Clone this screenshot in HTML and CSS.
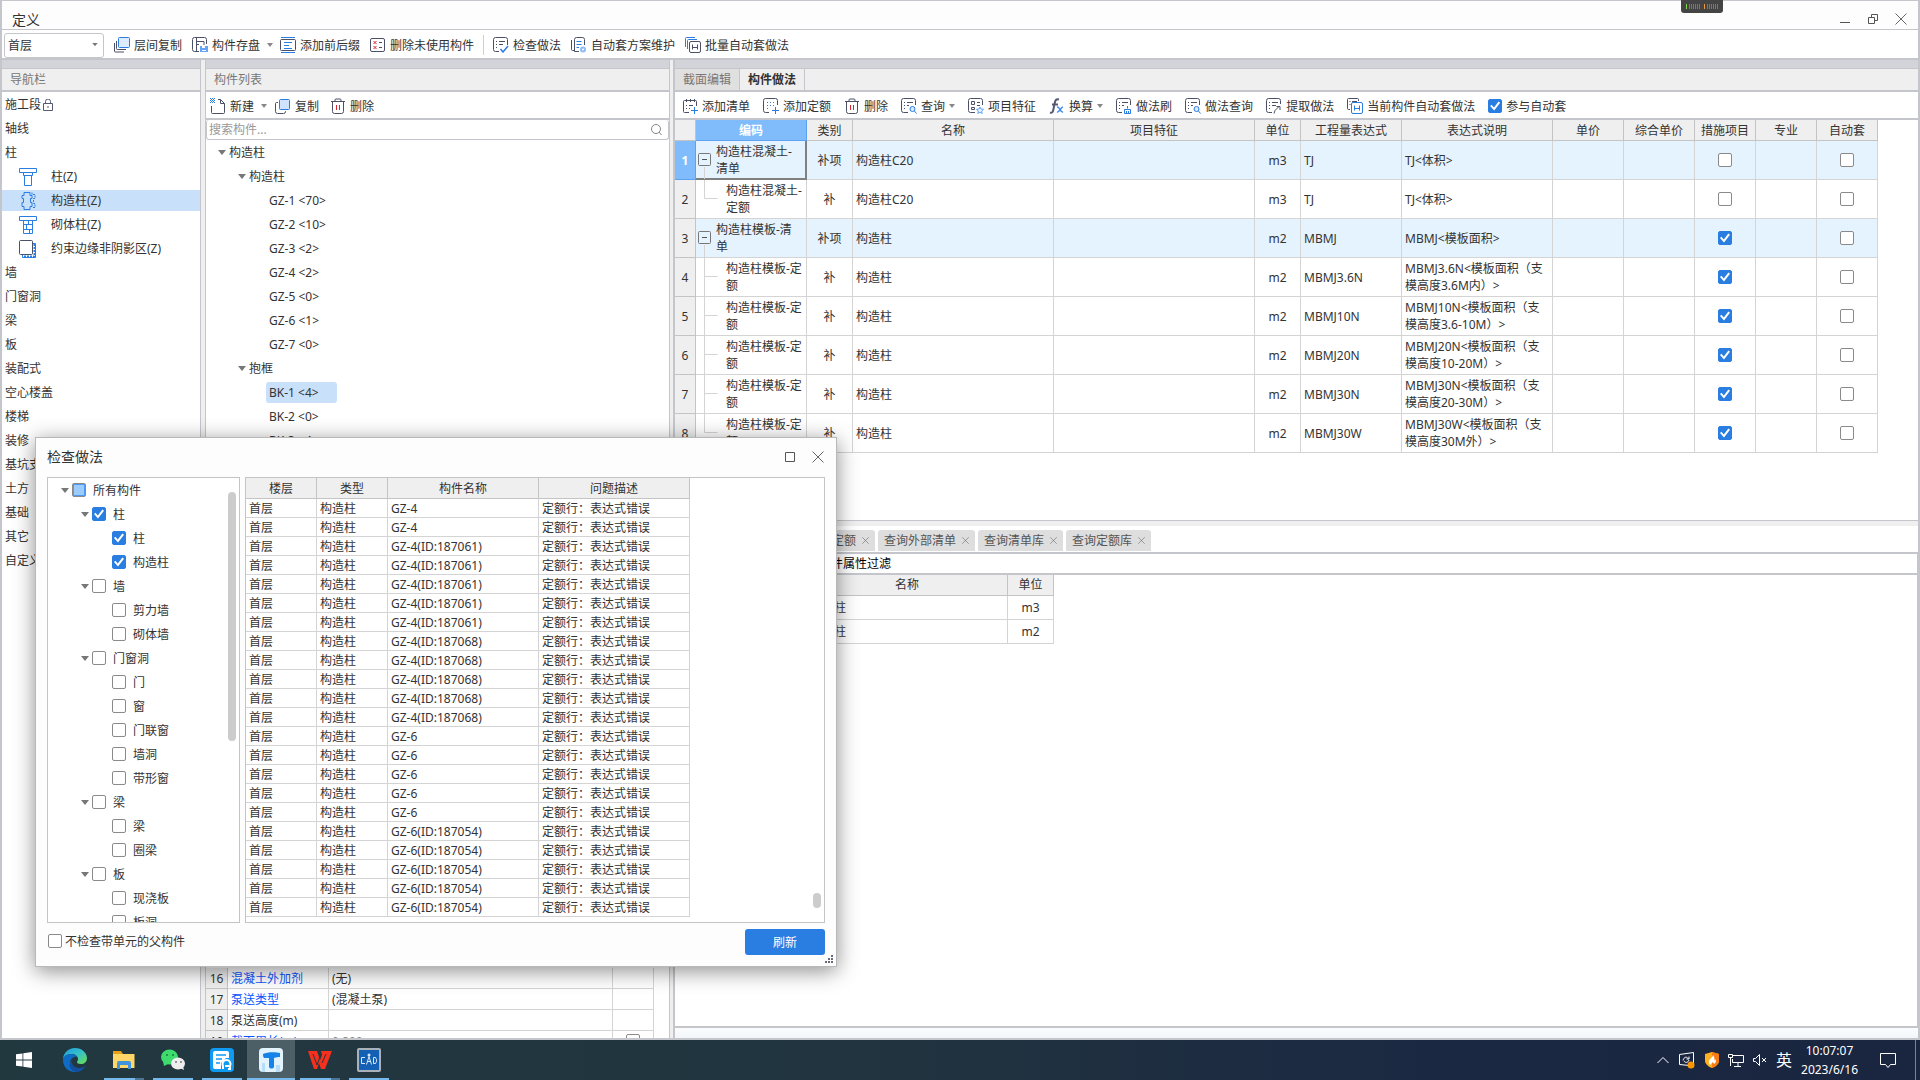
FILE: index.html
```html
<!DOCTYPE html>
<html lang="zh-CN">
<head>
<meta charset="utf-8">
<title>定义</title>
<link rel="stylesheet" href="styles.css">
</head>
<body>
<svg class="sprite" aria-hidden="true">
  <symbol id="i-layers" viewBox="0 0 16 16"><path class="b" fill="#dcebfd" d="M5.500.5h9a1 1 0 0 1 1 1v8a1 1 0 0 1-1 1h-9a1 1 0 0 1-1-1v-8a1 1 0 0 1 1-1z"/><path class="d" d="M2.500 4v7.500a1 1 0 0 0 1 1H12M.5 6v8a1 1 0 0 0 1 1H10"/></symbol>
  <symbol id="i-save" viewBox="0 0 16 16"><path class="d" d="M7 14.500H2.500a2 2 0 0 1-2-2v-10a2 2 0 0 1 2-2h10a2 2 0 0 1 2 2V7M4.500.5v14M4.500 4.500H12V8M4.500 7.500H7"/><path fill="#64a5f5" d="M8 9h8v6H8z"/><path fill="#fff" d="M10 9h3v2h-3zM10 13h4v1h-4z"/></symbol>
  <symbol id="i-affix" viewBox="0 0 16 16"><path class="b" d="M1 .5h14M1 15.500h14M4 5.500h8M4 8.500h5M4 11.500h8"/><rect class="d" x=".5" y="2.500" width="15" height="11" rx="1"/></symbol>
  <symbol id="i-unused" viewBox="0 0 16 16"><rect class="d" x=".5" y="1.500" width="14" height="13" rx="1.500"/><path class="d" d="M9 5.500h3M9 10.500h3"/><path class="r" d="M3.500 4l3 3m0-3l-3 3M3.500 9l3 3m0-3l-3 3"/></symbol>
  <symbol id="i-check" viewBox="0 0 16 16"><path class="d" d="M6 14.500H2.500a2 2 0 0 1-2-2v-10a2 2 0 0 1 2-2h10a2 2 0 0 1 2 2V8M3 4.500h1M6 4.500h6M3 7.500h1M6 7.500h4M3 10.500h1"/><path class="b" stroke-width="1.500" d="M7.500 12l2.500 3 5-6"/></symbol>
  <symbol id="i-plan" viewBox="0 0 16 16"><path class="d" d="M3 13.500H1.500a1 1 0 0 1-1-1V3M8 14.500H3.500V2.500a2 2 0 0 1 2-2h6a2 2 0 0 1 2 2V8"/><path class="b" d="M5.500 4.500h5M5.500 7.500h5M5.500 10.500H8"/><circle cx="12" cy="12.500" r="3" fill="#8dbbf3"/><circle cx="12" cy="12.500" r="1" fill="#fff"/></symbol>
  <symbol id="i-batch" viewBox="0 0 16 16"><path class="b" d="M.5 10V1.500a1 1 0 0 1 1-1H10M2.500 12V3.500a1 1 0 0 1 1-1H12"/><rect class="d" x="4.500" y="4.500" width="11" height="11" rx="1.500"/><path class="d" d="M7.500 7.500v5M12.500 7.500v5M7.500 10.500h5"/></symbol>
  <symbol id="i-new" viewBox="0 0 16 16"><path class="d" d="M1.500 8v6.500a1 1 0 0 0 1 1h11a1 1 0 0 0 1-1V5.500l-4-4H8M10.500 1.500v4h4"/><path stroke="#2a7de1" stroke-dasharray="1 1" d="M0 .5h5M0 2.500h5M0 4.500h5M1 1.500h4M1 3.500h4"/></symbol>
  <symbol id="i-copy" viewBox="0 0 16 16"><path class="d" d="M3 4.500H1.500a1 1 0 0 0-1 1v8a2 2 0 0 0 2 2h6a2 2 0 0 0 2-2V13"/><rect x="4.500" y="1.500" width="10" height="10" rx="1" fill="#cfe3fc" class="b"/></symbol>
  <symbol id="i-del" viewBox="0 0 16 16"><path class="d" d="M1 3.500h14M5 3V2a1 1 0 0 1 1-1h4a1 1 0 0 1 1 1v1M2.500 4v9.500a2 2 0 0 0 2 2h7a2 2 0 0 0 2-2V4"/><path class="r" d="M6.500 7v5M9.500 7v5"/></symbol>
  <symbol id="i-addlist" viewBox="0 0 16 16"><path class="d" d="M7 14.500H2.500a1 1 0 0 1-1-1v-10a1 1 0 0 1 1-1h11a1 1 0 0 1 1 1V8M4.500 1v3M8.500 1v3M12.500 1v3M4 7.500h1M7 7.500h4M4 10.500h1M7 10.500h1"/><path class="b" d="M12.500 9v7M9 12.500h7"/></symbol>
  <symbol id="i-addquota" viewBox="0 0 16 16"><path class="d" d="M6 14.500H2.500a2 2 0 0 1-2-2v-10a2 2 0 0 1 2-2h10a2 2 0 0 1 2 2V7"/><path class="b" stroke-dasharray="1 2" d="M4 4.500h8M4 7.500h8M4 10.500h3"/><path class="b" d="M12.500 9v7M9 12.500h7"/></symbol>
  <symbol id="i-query" viewBox="0 0 16 16"><path class="d" d="M7 14.500H2.500a2 2 0 0 1-2-2v-10a2 2 0 0 1 2-2h10a2 2 0 0 1 2 2V7M3 4.500h1M6 4.500h6M3 7.500h1M6 7.500h2M3 10.500h1"/><circle cx="11.500" cy="11" r="2.500" fill="#dcebfd" class="b"/><path class="b" d="M13.500 13l2 2.500"/></symbol>
  <symbol id="i-feature" viewBox="0 0 16 16"><path class="d" d="M7 14.500H2.500a2 2 0 0 1-2-2v-10a2 2 0 0 1 2-2h10a2 2 0 0 1 2 2V7M3.500 3.500h3v3h-3zM3.500 9.500h3v2h-3zM9 4.500h3M9 7.500h3"/><path stroke="#64a5f5" fill="#e8f2fe" d="M12 9l1 2 2.500.3-1.800 1.700.5 2.500-2.200-1.200-2.200 1.200.5-2.500L8.500 11.300 11 11z"/></symbol>
  <symbol id="i-fx" viewBox="0 0 16 16"><path stroke="#555a70" stroke-width="2" fill="none" d="M1 14.500c3 1 3-1 4-6s1-8 5-7M3 6.500h6"/><path stroke="#3d8cf0" stroke-width="1.500" fill="none" d="M8 9c3-1 3 6 6 5M14 9c-2 0-4 6-6 5"/></symbol>
  <symbol id="i-brush" viewBox="0 0 16 16"><path class="d" d="M6 14.500H2.500a2 2 0 0 1-2-2v-10a2 2 0 0 1 2-2h10a2 2 0 0 1 2 2V7M3 4.500h1M6 4.500h6M3 7.500h1M6 7.500h2M3 10.500h1"/><path class="b" d="M11.500 8v2.500M8.500 11.500h6v4h-6zM10.500 13v3M12.500 13v3"/></symbol>
  <symbol id="i-extract" viewBox="0 0 16 16"><path class="d" d="M6 14.500H2.500a2 2 0 0 1-2-2v-10a2 2 0 0 1 2-2h10a2 2 0 0 1 2 2V6M3 4.500h1M6 4.500h6M3 7.500h1M6 7.500h4M3 10.500h1M8 15.500l1-3 4-4M10.500 8.500h3.500V12"/></symbol>
  <symbol id="i-auto" viewBox="0 0 16 16"><path class="d" d="M3 11.500H1.500a1 1 0 0 1-1-1v-9a1 1 0 0 1 1-1h9a1 1 0 0 1 1 1V3M2.500 3.500h1M5 3.500h5M2.500 6.500h1"/><rect class="b" x="4.500" y="4.500" width="11" height="11" rx="1.500"/><path class="b" d="M7.500 7.500v5M12.500 7.500v5M7.500 10.500h5"/></symbol>
  <symbol id="i-col" viewBox="0 0 18 18"><path class="b" d="M.5.5h17v4H.5zM4.500 4.500h9v3h-9zM5.500 7.500h7v10h-7z"/></symbol>
  <symbol id="i-gz" viewBox="0 0 18 18"><path class="b" d="M5 .5h6v3h2v3h-1.500v4H13v4h-2v3H5v-3H3v-4h1.500v-4H3v-3h2z"/><path class="b" stroke-dasharray="2 1" d="M13 .5v2h3v4h-1.500v5H16v4h-3"/></symbol>
  <symbol id="i-brick" viewBox="0 0 18 18"><path class="b" d="M.5.5h17v4H.5zM4.500 4.500h9v13h-9zM4.500 8.500h9M4.500 13.500h9M9.500 4.500v4M7.500 8.500v5M10.500 13.500v4"/></symbol>
  <symbol id="i-edge" viewBox="0 0 18 18"><rect class="d" x=".5" y=".5" width="13" height="14" rx="1"/><path class="b" d="M14 3.500h2.500v14h-13V15"/><path stroke="#2a7de1" stroke-width="2" stroke-dasharray="2 1" fill="none" d="M15.500 4v12.500H4"/></symbol>
  <symbol id="i-tri" viewBox="0 0 8 6"><path fill="#777" d="M0 0h8L4 5z"/></symbol>
  <symbol id="i-x" viewBox="0 0 12 12"><path fill="none" stroke="#666" d="M.5.5l11 11M11.500.5l-11 11"/></symbol>
  <symbol id="i-open" viewBox="0 0 18 38"><path stroke="#d4d4d4" d="M8.500 26v12"/><rect x="2.500" y="12.500" width="12" height="12" rx="1" fill="none" stroke="#777"/><path stroke="#555" d="M6 18.500h5"/></symbol>
  <symbol id="i-mid" viewBox="0 0 28 38"><path stroke="#d4d4d4" fill="none" d="M8.500 0v38M8.500 18.500h13"/></symbol>
  <symbol id="i-end" viewBox="0 0 28 38"><path stroke="#d4d4d4" fill="none" d="M8.500 0v18.500h13"/></symbol>
</svg>

<main class="window">
  <header class="titlebar">
    <h1>定义</h1>
    <div class="meter"><svg width="32" height="5"><path stroke="#777" stroke-width="5" stroke-dasharray="1 1" d="M3 2.500h12M21 2.500h11"/><path stroke="#7ed63a" d="M.5 0v5"/><path stroke="#f0983a" d="M18.500 0v5"/></svg></div>
    <div class="win-buttons">
      <button type="button" aria-label="最小化"><svg width="12" height="12"><path stroke="#555" d="M1 9.500h10"/></svg></button>
      <button type="button" aria-label="还原"><svg width="12" height="12"><path stroke="#555" fill="none" d="M1.500 4.500h6v6h-6zM4.500 4.500v-3h6v6h-3"/></svg></button>
      <button type="button" aria-label="关闭"><svg width="12" height="12"><use href="#i-x"/></svg></button>
    </div>
  </header>

  <div class="toolbar main-tools">
    <div class="floor">
      <select aria-label="楼层"><option>首层</option></select>
      <svg width="6" height="4"><use href="#i-tri"/></svg>
    </div>
    <button type="button" class="tool"><svg><use href="#i-layers"/></svg>层间复制</button>
    <button type="button" class="tool"><svg><use href="#i-save"/></svg>构件存盘<i class="drop"></i></button>
    <button type="button" class="tool"><svg><use href="#i-affix"/></svg>添加前后缀</button>
    <button type="button" class="tool"><svg><use href="#i-unused"/></svg>删除未使用构件</button>
    <span class="sep"></span>
    <button type="button" class="tool"><svg><use href="#i-check"/></svg>检查做法</button>
    <button type="button" class="tool"><svg><use href="#i-plan"/></svg>自动套方案维护</button>
    <button type="button" class="tool"><svg><use href="#i-batch"/></svg>批量自动套做法</button>
  </div>

  <div class="panes">
    <nav class="pane">
      <div class="band"></div>
      <h2 class="pane-title">导航栏</h2>
      <ul class="nav">
        <li>施工段<svg width="10" height="12"><path fill="none" stroke="#555a70" d="M.5 4.500h9v7h-9zM2.500 4.500v-2a2 2 0 0 1 5 0v2M5 7v2"/></svg></li>
        <li>轴线</li>
        <li>柱</li>
        <li class="sub"><svg><use href="#i-col"/></svg>柱(Z)</li>
        <li class="sub active"><svg><use href="#i-gz"/></svg>构造柱(Z)</li>
        <li class="sub"><svg><use href="#i-brick"/></svg>砌体柱(Z)</li>
        <li class="sub"><svg><use href="#i-edge"/></svg>约束边缘非阴影区(Z)</li>
        <li>墙</li>
        <li>门窗洞</li>
        <li>梁</li>
        <li>板</li>
        <li>装配式</li>
        <li>空心楼盖</li>
        <li>楼梯</li>
        <li>装修</li>
        <li>基坑支护</li>
        <li>土方</li>
        <li>基础</li>
        <li>其它</li>
        <li>自定义</li>
      </ul>
    </nav>
    <div class="splitter"></div>

    <section class="pane">
      <div class="band"></div>
      <h2 class="pane-title">构件列表</h2>
      <div class="toolbar list-tools">
        <button type="button" class="tool"><svg><use href="#i-new"/></svg>新建<i class="drop"></i></button>
        <button type="button" class="tool"><svg><use href="#i-copy"/></svg>复制</button>
        <button type="button" class="tool"><svg><use href="#i-del"/></svg>删除</button>
      </div>
      <div class="search">
        <input type="text" placeholder="搜索构件..." aria-label="搜索构件">
        <svg width="11" height="11"><circle cx="5" cy="5" r="4.500" fill="none" stroke="#888"/><path stroke="#888" d="M8 8l2.500 3"/></svg>
      </div>
      <ul class="tree parts">
        <li class="l1"><i class="fold"></i>构造柱</li>
        <li class="l2"><i class="fold"></i>构造柱</li>
        <li class="l3"><span>GZ-1 &lt;70&gt;</span></li>
        <li class="l3"><span>GZ-2 &lt;10&gt;</span></li>
        <li class="l3"><span>GZ-3 &lt;2&gt;</span></li>
        <li class="l3"><span>GZ-4 &lt;2&gt;</span></li>
        <li class="l3"><span>GZ-5 &lt;0&gt;</span></li>
        <li class="l3"><span>GZ-6 &lt;1&gt;</span></li>
        <li class="l3"><span>GZ-7 &lt;0&gt;</span></li>
        <li class="l2"><i class="fold"></i>抱框</li>
        <li class="l3 active"><span>BK-1 &lt;4&gt;</span></li>
        <li class="l3"><span>BK-2 &lt;0&gt;</span></li>
        <li class="l3"><span>BK-3 &lt;4&gt;</span></li>
      </ul>
      <div class="props">
        <table class="grid">
          <colgroup><col class="w22"><col class="w101"><col class="w284"><col class="w41"></colgroup>
          <tr><th>16</th><td class="blue">混凝土外加剂</td><td>(无)</td><td></td></tr>
          <tr><th>17</th><td class="blue">泵送类型</td><td>(混凝土泵)</td><td></td></tr>
          <tr><th>18</th><td>泵送高度(m)</td><td></td><td></td></tr>
          <tr><th>19</th><td class="blue">截面周长(m)</td><td class="gray">0.800</td><td class="c"><input type="checkbox" aria-label="附加"></td></tr>
        </table>
      </div>
    </section>
    <div class="splitter"></div>

    <section class="pane work">
      <div class="upper">
        <div class="band"></div>
        <div class="tabs"><button type="button">截面编辑</button><button type="button" class="on">构件做法</button></div>
        <div class="toolbar work-tools">
          <button type="button" class="tool"><svg><use href="#i-addlist"/></svg>添加清单</button>
          <button type="button" class="tool"><svg><use href="#i-addquota"/></svg>添加定额</button>
          <button type="button" class="tool"><svg><use href="#i-del"/></svg>删除</button>
          <button type="button" class="tool"><svg><use href="#i-query"/></svg>查询<i class="drop"></i></button>
          <button type="button" class="tool"><svg><use href="#i-feature"/></svg>项目特征</button>
          <button type="button" class="tool"><svg><use href="#i-fx"/></svg>换算<i class="drop"></i></button>
          <button type="button" class="tool"><svg><use href="#i-brush"/></svg>做法刷</button>
          <button type="button" class="tool"><svg><use href="#i-query"/></svg>做法查询</button>
          <button type="button" class="tool"><svg><use href="#i-extract"/></svg>提取做法</button>
          <button type="button" class="tool"><svg><use href="#i-auto"/></svg>当前构件自动套做法</button>
          <label class="tick"><input type="checkbox" checked>参与自动套</label>
        </div>
        <table class="grid method">
          <colgroup><col class="w21"><col class="w111"><col class="w46"><col class="w201"><col class="w201"><col class="w46"><col class="w101"><col class="w151"><col class="w71"><col class="w71"><col class="w61"><col class="w61"><col class="w61"></colgroup>
          <thead><tr><th></th><th class="sel">编码</th><th>类别</th><th>名称</th><th>项目特征</th><th>单位</th><th>工程量表达式</th><th>表达式说明</th><th>单价</th><th>综合单价</th><th>措施项目</th><th>专业</th><th>自动套</th></tr></thead>
          <tbody>
            <tr class="list"><th class="sel">1</th><td class="code focus"><div class="item"><svg width="18" height="38"><use href="#i-open"/></svg><span>构造柱混凝土-清单</span></div></td><td class="c">补项</td><td>构造柱C20</td><td></td><td class="c">m3</td><td>TJ</td><td>TJ&lt;体积&gt;</td><td></td><td></td><td class="c"><input type="checkbox" aria-label="措施项目"></td><td></td><td class="c"><input type="checkbox" aria-label="自动套"></td></tr>
            <tr><th>2</th><td class="code"><div class="item"><svg width="28" height="38"><use href="#i-end"/></svg><span>构造柱混凝土-定额</span></div></td><td class="c">补</td><td>构造柱C20</td><td></td><td class="c">m3</td><td>TJ</td><td>TJ&lt;体积&gt;</td><td></td><td></td><td class="c"><input type="checkbox" aria-label="措施项目"></td><td></td><td class="c"><input type="checkbox" aria-label="自动套"></td></tr>
            <tr class="list"><th>3</th><td class="code"><div class="item"><svg width="18" height="38"><use href="#i-open"/></svg><span>构造柱模板-清单</span></div></td><td class="c">补项</td><td>构造柱</td><td></td><td class="c">m2</td><td>MBMJ</td><td>MBMJ&lt;模板面积&gt;</td><td></td><td></td><td class="c"><input type="checkbox" checked aria-label="措施项目"></td><td></td><td class="c"><input type="checkbox" aria-label="自动套"></td></tr>
            <tr><th>4</th><td class="code"><div class="item"><svg width="28" height="38"><use href="#i-mid"/></svg><span>构造柱模板-定额</span></div></td><td class="c">补</td><td>构造柱</td><td></td><td class="c">m2</td><td>MBMJ3.6N</td><td>MBMJ3.6N&lt;模板面积（支<br>模高度3.6M内）&gt;</td><td></td><td></td><td class="c"><input type="checkbox" checked aria-label="措施项目"></td><td></td><td class="c"><input type="checkbox" aria-label="自动套"></td></tr>
            <tr><th>5</th><td class="code"><div class="item"><svg width="28" height="38"><use href="#i-mid"/></svg><span>构造柱模板-定额</span></div></td><td class="c">补</td><td>构造柱</td><td></td><td class="c">m2</td><td>MBMJ10N</td><td>MBMJ10N&lt;模板面积（支<br>模高度3.6-10M）&gt;</td><td></td><td></td><td class="c"><input type="checkbox" checked aria-label="措施项目"></td><td></td><td class="c"><input type="checkbox" aria-label="自动套"></td></tr>
            <tr><th>6</th><td class="code"><div class="item"><svg width="28" height="38"><use href="#i-mid"/></svg><span>构造柱模板-定额</span></div></td><td class="c">补</td><td>构造柱</td><td></td><td class="c">m2</td><td>MBMJ20N</td><td>MBMJ20N&lt;模板面积（支<br>模高度10-20M）&gt;</td><td></td><td></td><td class="c"><input type="checkbox" checked aria-label="措施项目"></td><td></td><td class="c"><input type="checkbox" aria-label="自动套"></td></tr>
            <tr><th>7</th><td class="code"><div class="item"><svg width="28" height="38"><use href="#i-mid"/></svg><span>构造柱模板-定额</span></div></td><td class="c">补</td><td>构造柱</td><td></td><td class="c">m2</td><td>MBMJ30N</td><td>MBMJ30N&lt;模板面积（支<br>模高度20-30M）&gt;</td><td></td><td></td><td class="c"><input type="checkbox" checked aria-label="措施项目"></td><td></td><td class="c"><input type="checkbox" aria-label="自动套"></td></tr>
            <tr><th>8</th><td class="code"><div class="item"><svg width="28" height="38"><use href="#i-end"/></svg><span>构造柱模板-定额</span></div></td><td class="c">补</td><td>构造柱</td><td></td><td class="c">m2</td><td>MBMJ30W</td><td>MBMJ30W&lt;模板面积（支<br>模高度30M外）&gt;</td><td></td><td></td><td class="c"><input type="checkbox" checked aria-label="措施项目"></td><td></td><td class="c"><input type="checkbox" aria-label="自动套"></td></tr>
          </tbody>
        </table>
      </div>
      <div class="hsplit"></div>
      <div class="lower">
        <div class="chips">
          <button type="button">查询匹配清单<svg><use href="#i-x"/></svg></button>
          <button type="button">查询匹配定额<svg><use href="#i-x"/></svg></button>
          <button type="button">查询外部清单<svg><use href="#i-x"/></svg></button>
          <button type="button">查询清单库<svg><use href="#i-x"/></svg></button>
          <button type="button">查询定额库<svg><use href="#i-x"/></svg></button>
        </div>
        <div class="query">
          <div class="filter">
            <label><input type="radio" name="filter">按构件类型过滤</label>
            <label><input type="radio" name="filter" checked>按构件属性过滤</label>
          </div>
          <table class="grid match">
            <colgroup><col class="w21"><col class="w111"><col class="w201"><col class="w46"></colgroup>
            <thead><tr><th></th><th>编码</th><th>名称</th><th>单位</th></tr></thead>
            <tbody>
              <tr><th>1</th><td></td><td>构造柱</td><td class="c">m3</td></tr>
              <tr><th>2</th><td></td><td>构造柱</td><td class="c">m2</td></tr>
            </tbody>
          </table>
        </div>
      </div>
    </section>
  </div>

  <section class="dialog" role="dialog" aria-labelledby="dlg-title">
    <header>
      <h2 id="dlg-title">检查做法</h2>
      <button type="button" aria-label="最大化"><svg width="12" height="12"><path fill="none" stroke="#555" d="M1.500 1.500h9v9h-9z"/></svg></button>
      <button type="button" aria-label="关闭"><svg width="12" height="12"><use href="#i-x"/></svg></button>
    </header>
    <div class="dialog-body">
      <div class="box">
        <ul class="tree kinds">
          <li class="l1"><i class="fold"></i><label><input type="checkbox" class="partial">所有构件</label></li>
          <li class="l2"><i class="fold"></i><label><input type="checkbox" checked>柱</label></li>
          <li class="l3"><label><input type="checkbox" checked>柱</label></li>
          <li class="l3"><label><input type="checkbox" checked>构造柱</label></li>
          <li class="l2"><i class="fold"></i><label><input type="checkbox">墙</label></li>
          <li class="l3"><label><input type="checkbox">剪力墙</label></li>
          <li class="l3"><label><input type="checkbox">砌体墙</label></li>
          <li class="l2"><i class="fold"></i><label><input type="checkbox">门窗洞</label></li>
          <li class="l3"><label><input type="checkbox">门</label></li>
          <li class="l3"><label><input type="checkbox">窗</label></li>
          <li class="l3"><label><input type="checkbox">门联窗</label></li>
          <li class="l3"><label><input type="checkbox">墙洞</label></li>
          <li class="l3"><label><input type="checkbox">带形窗</label></li>
          <li class="l2"><i class="fold"></i><label><input type="checkbox">梁</label></li>
          <li class="l3"><label><input type="checkbox">梁</label></li>
          <li class="l3"><label><input type="checkbox">圈梁</label></li>
          <li class="l2"><i class="fold"></i><label><input type="checkbox">板</label></li>
          <li class="l3"><label><input type="checkbox">现浇板</label></li>
          <li class="l3"><label><input type="checkbox">板洞</label></li>
        </ul>
        <div class="track kinds-track"><i></i></div>
      </div>
      <div class="box results">
        <table class="grid issues">
          <colgroup><col class="w71"><col class="w71"><col class="w151"><col class="w151"></colgroup>
          <thead><tr><th>楼层</th><th>类型</th><th>构件名称</th><th>问题描述</th></tr></thead>
          <tbody>
            <tr><td>首层</td><td>构造柱</td><td>GZ-4</td><td>定额行：表达式错误</td></tr>
            <tr><td>首层</td><td>构造柱</td><td>GZ-4</td><td>定额行：表达式错误</td></tr>
            <tr><td>首层</td><td>构造柱</td><td>GZ-4(ID:187061)</td><td>定额行：表达式错误</td></tr>
            <tr><td>首层</td><td>构造柱</td><td>GZ-4(ID:187061)</td><td>定额行：表达式错误</td></tr>
            <tr><td>首层</td><td>构造柱</td><td>GZ-4(ID:187061)</td><td>定额行：表达式错误</td></tr>
            <tr><td>首层</td><td>构造柱</td><td>GZ-4(ID:187061)</td><td>定额行：表达式错误</td></tr>
            <tr><td>首层</td><td>构造柱</td><td>GZ-4(ID:187061)</td><td>定额行：表达式错误</td></tr>
            <tr><td>首层</td><td>构造柱</td><td>GZ-4(ID:187068)</td><td>定额行：表达式错误</td></tr>
            <tr><td>首层</td><td>构造柱</td><td>GZ-4(ID:187068)</td><td>定额行：表达式错误</td></tr>
            <tr><td>首层</td><td>构造柱</td><td>GZ-4(ID:187068)</td><td>定额行：表达式错误</td></tr>
            <tr><td>首层</td><td>构造柱</td><td>GZ-4(ID:187068)</td><td>定额行：表达式错误</td></tr>
            <tr><td>首层</td><td>构造柱</td><td>GZ-4(ID:187068)</td><td>定额行：表达式错误</td></tr>
            <tr><td>首层</td><td>构造柱</td><td>GZ-6</td><td>定额行：表达式错误</td></tr>
            <tr><td>首层</td><td>构造柱</td><td>GZ-6</td><td>定额行：表达式错误</td></tr>
            <tr><td>首层</td><td>构造柱</td><td>GZ-6</td><td>定额行：表达式错误</td></tr>
            <tr><td>首层</td><td>构造柱</td><td>GZ-6</td><td>定额行：表达式错误</td></tr>
            <tr><td>首层</td><td>构造柱</td><td>GZ-6</td><td>定额行：表达式错误</td></tr>
            <tr><td>首层</td><td>构造柱</td><td>GZ-6(ID:187054)</td><td>定额行：表达式错误</td></tr>
            <tr><td>首层</td><td>构造柱</td><td>GZ-6(ID:187054)</td><td>定额行：表达式错误</td></tr>
            <tr><td>首层</td><td>构造柱</td><td>GZ-6(ID:187054)</td><td>定额行：表达式错误</td></tr>
            <tr><td>首层</td><td>构造柱</td><td>GZ-6(ID:187054)</td><td>定额行：表达式错误</td></tr>
            <tr><td>首层</td><td>构造柱</td><td>GZ-6(ID:187054)</td><td>定额行：表达式错误</td></tr>
          </tbody>
        </table>
        <div class="track results-track"><i></i></div>
      </div>
    </div>
    <footer>
      <label class="tick"><input type="checkbox">不检查带单元的父构件</label>
      <button type="button" class="primary">刷新</button>
    </footer>
    <svg class="grip" width="8" height="8"><path fill="#666b78" d="M6 0h2v2H6zM3 3h2v2H3zM6 3h2v2H6zM0 6h2v2H0zM3 6h2v2H3zM6 6h2v2H6z"/></svg>
  </section>
</main>

<footer class="taskbar">
  <div class="apps">
    <button type="button" class="start" aria-label="开始"><svg width="16" height="16" viewBox="0 0 16 16"><path fill="#fff" d="M0 2.300L6.500 1.400v6.200H0zM7.300 1.200L16 0v7.600H7.300zM0 8.400h6.500v6.200L0 13.700zM7.300 8.400H16V16l-8.700-1.200z"/></svg></button>
    <button type="button" aria-label="Edge"><svg width="24" height="24" viewBox="0 0 24 24"><defs><linearGradient id="eg" x1="0" y1="0" x2="1" y2="1"><stop offset="0" stop-color="#1e9be0"/><stop offset=".5" stop-color="#35c1c8"/><stop offset="1" stop-color="#6be04f"/></linearGradient></defs><path fill="url(#eg)" d="M0 12C0 5 5 0 12 0s12 5 12 10c0 4-3 6-6 6-3 0-4-1-4-2s1-1 1-3c0-3-3-5-7-5-5 0-8 4-8 6z"/><path fill="#0f6cc4" d="M0 12c0-4 4-6 8-6 3 0 5 1 6 3-3-1-7 2-7 6 0 5 4 8 8 8-1 1-3 1-3 1C5 24 0 19 0 12z"/><path fill="#124f9e" d="M9 12c-1 4 2 8 7 8 3 0 5-1 6-2 1 0 0 1 0 1-2 3-5 5-9 5-6-1-9-8-4-12z"/></svg></button>
    <button type="button" class="run pair" aria-label="文件资源管理器"><svg width="22" height="20" viewBox="0 0 22 20"><path fill="#e3a21a" d="M0 1h8l2 3h11v4H0z"/><path fill="#ffd768" d="M0 4h21.500v14H0z"/><path fill="#3f94dc" d="M4 19v-6a2 2 0 0 1 2-2h10a2 2 0 0 1 2 2v6h-3v-4H7v4z"/></svg></button>
    <button type="button" class="run" aria-label="微信"><svg width="24" height="22" viewBox="0 0 24 22"><ellipse cx="8.500" cy="8" rx="8.500" ry="7.500" fill="#3ddc6d"/><path fill="#3ddc6d" d="M2 12l1 5 4-2z"/><circle cx="6" cy="6" r="1" fill="#17803a"/><circle cx="12" cy="6" r="1" fill="#17803a"/><ellipse cx="17" cy="14.500" rx="7" ry="6" fill="#eee"/><path fill="#eee" d="M19 19l4 2-1-4z"/><circle cx="15" cy="13" r="1" fill="#777"/><circle cx="20" cy="13" r="1" fill="#777"/></svg></button>
    <button type="button" class="run" aria-label="计价"><svg width="24" height="24" viewBox="0 0 24 24"><rect width="24" height="24" rx="4" fill="#0f9bf2"/><path fill="#fff" d="M5 3h12a2 2 0 0 1 2 2v5h-3l-5 5v6H5a2 2 0 0 1-2-2V5a2 2 0 0 1 2-2z"/><path fill="none" stroke="#0f9bf2" stroke-width="1.500" d="M6 7h10M6 11h6M6 15h4"/><path fill="none" stroke="#fff" stroke-width="2" d="M13 21v-3a4 4 0 1 1 7 0v3h-2M15 18h4"/></svg></button>
    <button type="button" class="run current" aria-label="土建计量"><svg width="24" height="24" viewBox="0 0 24 24"><rect width="24" height="24" rx="4" fill="#e3f3fd"/><path fill="#b8def7" d="M3 24v-9h3v9zM17 24v-7h4v7z"/><path fill="#1583e8" d="M4 6c4-2 12-2 17-1v4c-2 0-4 0-6 1v9c-1 2-4 2-5 0v-9H5c-1-1-1-3-1-4z"/></svg></button>
    <button type="button" class="run pair" aria-label="WPS"><svg width="24" height="18" viewBox="0 0 24 18"><path fill="#f5301d" d="M0 0h9l3 9 2-5-1-4h11l-7 18h-4l-2-6-2 6H6z"/><path fill="none" stroke="#22373f" d="M5 3l4 11 4-11M14 12l4-9"/></svg></button>
    <button type="button" class="run" aria-label="CAD"><svg width="24" height="24" viewBox="0 0 24 24"><rect width="24" height="24" rx="2" fill="#a9b2ba"/><rect x="2" y="2" width="20" height="20" fill="#1460b4"/><path fill="none" stroke="#d8e8f8" d="M8 9.500H4.500v6H8M9.500 16.500l2.500-8 2.500 8M10 13.500h4M16.500 9.500h2l1 2v2l-1 2h-2z"/><circle cx="12" cy="7" r="1.500" fill="#d8e8f8"/></svg></button>
  </div>
  <div class="tray">
    <svg width="12" height="8"><path class="w" d="M.5 7L6 1.500 11.500 7"/></svg>
    <svg width="18" height="18"><path class="w" d="M1.500 3.500l14-2v12l-4 1-10-1zM5 9.500c1-4 4-4 5-2M11 5.500v2.500H8.500M11 9c-1 3-4 3-5 1"/><circle cx="13" cy="14" r="3.500" fill="#ff9800"/></svg>
    <svg width="14" height="16"><path fill="#ffb020" d="M0 2l7-2 7 2v7c0 3-4 6-7 7-3-1-7-4-7-7z"/><path fill="#f57c14" d="M7 0l7 2v7c0 3-4 6-7 7z"/><path fill="#fff" d="M8 3c0 3-5 4-4 8l1 2 3-3 1 2c3-2 2-4 1-5l-1 2c1-3 0-5-1-6z"/></svg>
    <svg width="16" height="14"><path class="w" d="M4 2.500h11.500v7H4.500V6M.5 1.500h4v3h-4zM2.500 5v8M10 10v3M6 13.500h7"/></svg>
    <svg width="14" height="14"><path class="w" d="M.5 5.500h2l4-4v11l-4-4h-2zM9 5l4 4m0-4l-4 4"/></svg>
    <span class="ime">英</span>
    <div class="clock"><time>10:07:07</time><time>2023/6/16</time></div>
    <svg width="16" height="16"><path class="w" d="M.5 1.500h15v11h-5l-2.500 3-2.500-3h-5z"/></svg>
    <span class="desk"></span>
  </div>
</footer>
</body>
</html>
```
FILE: styles.css
```css
* { box-sizing: border-box; }
html, body { height: 100%; }
body {
  margin: 0;
  display: flex;
  flex-direction: column;
  overflow: hidden;
  font: 12px/17px "Noto Sans", "Noto Sans CJK SC", sans-serif;
  color: #333;
  background: #fff;
}
h1, h2 { margin: 0; font-weight: normal; }
ul { margin: 0; padding: 0; list-style: none; }
button { font: inherit; color: inherit; border: 0; padding: 0; background: none; white-space: nowrap; }
svg { display: block; flex: none; }
.sprite { display: none; }
.d { fill: none; stroke: #4b5066; }
.b { stroke: #2a7de1; }
.b:not([fill]) { fill: none; }
.r { fill: none; stroke: #d9232e; }
.w { fill: none; stroke: #fff; }

input[type="checkbox"] {
  appearance: none;
  flex: none;
  width: 14px;
  height: 14px;
  margin: 0;
  display: inline-grid;
  place-content: center;
  border: 1px solid #8a8a8a;
  border-radius: 2px;
  background: #fff;
  vertical-align: middle;
}
input[type="checkbox"]:checked { background: #2a7de1; border-color: #2a7de1; }
input[type="checkbox"]:checked::before {
  content: "";
  width: 10px;
  height: 10px;
  background: #fff;
  clip-path: polygon(0 50%, 14% 38%, 38% 66%, 84% 6%, 100% 18%, 40% 94%);
}
input.partial::before { content: ""; width: 10px; height: 10px; background: #9ccbfd; border: 1px solid #4f9bf3; }
input[type="radio"] { width: 14px; height: 14px; margin: 0 4px 0 0; }

/* window */
.window {
  flex: 1;
  min-height: 0;
  position: relative;
  display: flex;
  flex-direction: column;
  border: solid #c4c6cb;
  border-width: 1px 2px 2px;
}
.titlebar {
  display: flex;
  justify-content: space-between;
  height: 29px;
  padding: 9px 11px 0 10px;
  border-bottom: 1px solid #c4c6cb;
  background: #fdfdfd;
}
.titlebar h1 { font-size: 14px; line-height: 20px; }
.meter {
  height: 13px;
  margin: -10px 116px 0 auto;
  padding: 4px 5px;
  border-radius: 0 0 3px 3px;
  background: #444;
}
.win-buttons { display: flex; gap: 16px; height: 18px; align-items: center; }
.toolbar { display: flex; align-items: center; padding-top: 2px; border-bottom: 2px solid #c4c6cb; background: #fff; }
.tool { display: flex; align-items: center; gap: 4px; }
.tool svg { width: 16px; height: 16px; }
.drop { width: 5px; border: solid transparent; border-width: 4px 3px 0; border-top-color: #888; margin: 0 -3px 0 3px; }
.main-tools { height: 30px; padding-left: 2px; gap: 10px; }
.floor { display: grid; align-items: center; width: 100px; height: 25px; border: 1px solid #c4c6cb; border-radius: 3px; }
.floor select, .floor svg { grid-area: 1 / 1; }
.floor select { appearance: none; border: 0; padding: 0 3px; height: 22px; font: inherit; color: inherit; background: none; }
.floor svg { justify-self: end; margin-right: 5px; pointer-events: none; }
.sep { width: 1px; height: 20px; margin: 0 -1px; background: #d0d0d0; }

.panes { flex: 1; min-height: 0; display: grid; grid-template-columns: 198px 6px 463px 5px minmax(0, 1fr); }
.pane { min-width: 0; min-height: 0; display: flex; flex-direction: column; overflow: hidden; }
.splitter { border: solid #c4c6cb; border-width: 0 1px; background: #efefef; }
.band { flex: none; height: 9px; border-bottom: 1px solid #c4c6cb; background: #d3d4da; }
.pane-title { flex: none; height: 23px; padding-left: 8px; line-height: 21px; font-size: 12px; color: #777; border-bottom: 2px solid #c4c6cb; background: #efefef; }

.nav li { display: flex; align-items: center; gap: 2px; height: 21px; margin: 2px 0 3px; padding-left: 3px; white-space: nowrap; }
.nav .sub { gap: 14px; padding-left: 17px; }
.nav .sub svg { width: 18px; height: 18px; }
.active { --hit: #c9e0fa; }
.nav .active { background: var(--hit); }

.list-tools { flex: none; height: 28px; padding-left: 4px; gap: 11px; }
.search { flex: none; display: flex; align-items: center; height: 20px; padding: 0 6px 0 2px; border: 1px solid #c4c6cb; border-width: 0 1px 1px; border-radius: 3px; }
.search input { flex: 1; border: 0; padding: 0; font: inherit; background: none; outline: 0; }
.search input::placeholder { color: #999; }

.tree li { display: flex; align-items: center; height: 24px; white-space: nowrap; }
.fold { width: 7px; border: solid transparent; border-width: 5px 4px 0; border-top-color: #777; margin-right: 3px; }
.parts { flex: 1; min-height: 0; overflow: hidden; }
.parts .l1 { padding-left: 12px; }
.parts .l2 { padding-left: 32px; }
.parts .l3 { padding-left: 60px; }
.parts span { height: 21px; padding: 0 18px 0 3px; line-height: 21px; border-radius: 3px; background: var(--hit); }
.props { flex: none; height: 70px; overflow: hidden; }
.props th, .props td { height: 21px; }

/* grids */
.grid { border-collapse: separate; border-spacing: 0; }
.grid th, .grid td { padding: 0 3px; border: solid #d4d4d4; border-width: 0 1px 1px 0; text-align: left; white-space: nowrap; }
.grid th { padding: 0; text-align: center; font-weight: normal; background: #efefef; border-color: #c4c4c4; }
.grid .c { padding: 0; text-align: center; }
.grid .c input { display: grid; margin: auto; }
.grid thead th { height: 21px; }
.w21 { width: 21px; } .w22 { width: 22px; } .w41 { width: 41px; } .w46 { width: 46px; }
.w61 { width: 61px; } .w71 { width: 71px; } .w101 { width: 101px; } .w111 { width: 111px; }
.w151 { width: 151px; } .w201 { width: 201px; } .w284 { width: 284px; }
.blue { color: #0a55ff; }
.gray { color: #888; }

.work { border-left: 1px solid #c4c6cb; }
.upper { flex: 19 1 0; min-height: 0; overflow: hidden; }
.tabs { display: flex; height: 23px; border-bottom: 2px solid #c4c6cb; background: #efefef; }
.tabs button { padding: 0 8px; border-right: 1px solid #c4c6cb; color: #777; background: #e0e0e0; }
.tabs .on { color: #333; font-weight: bold; background: #efefef; }
.work-tools { height: 28px; padding-left: 7px; gap: 13px; }
.work-tools .drop { margin: 0; }
.tick { display: flex; align-items: center; gap: 4px; white-space: nowrap; }
.method { table-layout: fixed; }
.method tbody th, .method tbody td { height: 39px; }
.method .list td { background: #e5f3ff; }
.method .sel { color: #fff; font-weight: bold; background: #80bcfc; border-color: #5ba3f0; }
.method .code { padding: 0; }
.item { display: flex; align-items: center; height: 38px; }
.item span { flex: 1; white-space: normal; word-break: break-all; }
.item svg + span { margin-left: 2px; }
.list .item span { padding-right: 8px; }
.method .focus { border-right: 2px solid #808080; border-bottom: 2px solid #808080; }
.focus .item { height: 37px; }

.hsplit { flex: none; height: 6px; border-top: 1px solid #c4c6cb; background: #efefef; }
.lower { flex: 21 1 0; min-height: 0; display: flex; flex-direction: column; padding-top: 4px; background: linear-gradient(#fff 97%, #f2f7fb); }
.chips { display: flex; gap: 3px; padding: 0 3px 1px; }
.chips button { display: flex; align-items: center; gap: 6px; height: 21px; padding: 0 6px; border-radius: 3px 3px 0 0; color: #555; background: #dedede; }
.chips svg { width: 7px; height: 7px; }
.query { flex: 1; min-height: 0; margin-bottom: 10px; border: solid #c4c6cb; border-width: 2px 1px 2px 0; background: #fff; }
.filter { display: flex; gap: 6px; height: 21px; padding-left: 6px; border-bottom: 2px solid #c4c6cb; color: #000; }
.filter label { display: flex; align-items: center; white-space: nowrap; }
.match tbody th, .match tbody td { height: 24px; }

/* dialog */
.dialog {
  position: absolute;
  left: 33px;
  top: 436px;
  width: 802px;
  height: 530px;
  display: flex;
  flex-direction: column;
  padding: 0 11px;
  border: 1px solid #b8b8b8;
  background: #fdfdfd;
  box-shadow: 0 4px 20px rgba(0, 0, 0, .45);
}
.dialog header { display: flex; align-items: center; gap: 16px; height: 39px; padding: 0 1px 2px 0; }
.dialog header h2 { flex: 1; font-size: 14px; }
.dialog-body { flex: 1; min-height: 0; display: grid; grid-template-columns: 193px minmax(0, 1fr); gap: 5px; }
.box { display: flex; min-height: 0; overflow: hidden; border: 1px solid #c4c4c4; background: #fff; }
.kinds { flex: 1; }
.kinds label { display: flex; align-items: center; gap: 7px; }
.kinds .l1 { padding-left: 13px; }
.kinds .l2 { padding-left: 33px; }
.kinds .l3 { padding-left: 64px; }
.track { width: 8px; }
.track i { display: block; border-radius: 4px; background: #ccc; }
.kinds-track { margin: 14px 3px 0 0; }
.kinds-track i { height: 249px; }
.results { justify-content: space-between; align-items: flex-start; }
.results-track { align-self: flex-end; margin: 0 3px 14px 0; }
.results-track i { height: 15px; }
.issues tbody td { height: 19px; }
.dialog footer { display: flex; align-items: flex-start; justify-content: space-between; height: 43px; padding: 6px 0 0 1px; }
.dialog footer .tick { height: 24px; gap: 3px; }
.primary { width: 80px; height: 26px; border-radius: 3px; color: #fff; background: #2a7de1; }
.grip { position: absolute; right: 3px; bottom: 3px; }

/* taskbar */
.taskbar { flex: none; display: flex; justify-content: space-between; height: 40px; color: #fff; background: linear-gradient(90deg, #22383f, #21343f 45%, #1b2842 75%, #1a2640); }
.apps { display: flex; gap: 1px; }
.apps button { width: 48px; display: grid; place-items: center; border: solid transparent; border-width: 2px 0; }
.apps .start { margin-right: 2px; }
.apps .run { background: linear-gradient(#76b9ed, #76b9ed) bottom / 40px 2px no-repeat border-box; }
.apps .pair { background: linear-gradient(90deg, #76b9ed 31px, #4b7795 31px) bottom / 40px 2px no-repeat border-box; }
.apps .current { background: linear-gradient(#76b9ed, #76b9ed) bottom / 48px 2px no-repeat border-box, #4d5f66; }
.tray { display: flex; align-items: center; gap: 9px; padding-right: 4px; }
.ime { font-size: 16px; }
.clock { display: grid; justify-items: center; line-height: 19px; margin-right: 13px; }
.desk { width: 1px; height: 40px; margin-left: 10px; background: #7c8494; }
```
